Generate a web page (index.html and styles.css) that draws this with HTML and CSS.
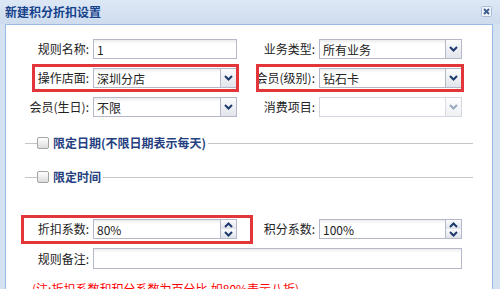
FILE: index.html
```html
<!DOCTYPE html>
<html lang="zh-CN">
<head>
    <meta charset="UTF-8">
    <title>新建积分折扣设置</title>
    <link rel="stylesheet" href="styles.css">
</head>
<body>

    <!-- Dialog window -->
    <div class="window">
        <div class="window-header">
            <span class="window-title">新建积分折扣设置</span>
            <span class="window-close">
                <svg width="11" height="11" viewBox="0 0 11 11">
                    <rect x="0.5" y="0.5" width="10" height="10" rx="1" fill="#eef3fa" stroke="#a9bcd8"/>
                    <path d="M3 3 L8 8 M8 3 L3 8" stroke="#3d5b8c" stroke-width="1.8"/>
                </svg>
            </span>
        </div>

        <div class="window-body">
            <div class="form">
                <div class="form-row">
                    <div class="field">
                        <label class="field-label">规则名称:</label>
                        <div class="field-box"><input class="field-input" value="1"></div>
                    </div>
                    <div class="field field-right">
                        <label class="field-label">业务类型:</label>
                        <div class="field-box">
                            <input class="field-input" value="所有业务">
                            <span class="trigger"><svg width="9" height="6" viewBox="0 0 9 6"><polyline points="1,1 4.5,4.5 8,1" fill="none" stroke="#1e3a6c" stroke-width="2"/></svg></span>
                        </div>
                    </div>
                </div>

                <div class="form-row">
                    <div class="field">
                        <label class="field-label">操作店面:</label>
                        <div class="field-box">
                            <input class="field-input" value="深圳分店">
                            <span class="trigger"><svg width="9" height="6" viewBox="0 0 9 6"><polyline points="1,1 4.5,4.5 8,1" fill="none" stroke="#1e3a6c" stroke-width="2"/></svg></span>
                        </div>
                    </div>
                    <div class="field field-right">
                        <label class="field-label">会员(级别):</label>
                        <div class="field-box">
                            <input class="field-input" value="钻石卡">
                            <span class="trigger"><svg width="9" height="6" viewBox="0 0 9 6"><polyline points="1,1 4.5,4.5 8,1" fill="none" stroke="#1e3a6c" stroke-width="2"/></svg></span>
                        </div>
                    </div>
                </div>

                <div class="form-row">
                    <div class="field">
                        <label class="field-label">会员(生日):</label>
                        <div class="field-box">
                            <input class="field-input" value="不限">
                            <span class="trigger"><svg width="9" height="6" viewBox="0 0 9 6"><polyline points="1,1 4.5,4.5 8,1" fill="none" stroke="#1e3a6c" stroke-width="2"/></svg></span>
                        </div>
                    </div>
                    <div class="field field-right">
                        <label class="field-label">消费项目:</label>
                        <div class="field-box disabled">
                            <input class="field-input" value="" disabled>
                            <span class="trigger"><svg width="9" height="6" viewBox="0 0 9 6"><polyline points="1,1 4.5,4.5 8,1" fill="none" stroke="#9aa8bf" stroke-width="2"/></svg></span>
                        </div>
                    </div>
                </div>

                <!-- Collapsed fieldsets -->
                <div class="groups">
                    <div class="group">
                        <span class="group-line short"></span>
                        <span class="checkbox"></span>
                        <span class="group-title">限定日期(不限日期表示每天)</span>
                        <span class="group-line"></span>
                    </div>
                    <div class="group">
                        <span class="group-line short"></span>
                        <span class="checkbox"></span>
                        <span class="group-title">限定时间</span>
                        <span class="group-line"></span>
                    </div>
                </div>

                <div class="form-row">
                    <div class="field">
                        <label class="field-label">折扣系数:</label>
                        <div class="field-box">
                            <input class="field-input" value="80%">
                            <span class="spinner">
                                <span class="spin"><svg width="9" height="6" viewBox="0 0 9 6"><polyline points="1,5 4.5,1.5 8,5" fill="none" stroke="#1e3a6c" stroke-width="2"/></svg></span>
                                <span class="spin"><svg width="9" height="6" viewBox="0 0 9 6"><polyline points="1,1 4.5,4.5 8,1" fill="none" stroke="#1e3a6c" stroke-width="2"/></svg></span>
                            </span>
                        </div>
                    </div>
                    <div class="field field-right">
                        <label class="field-label">积分系数:</label>
                        <div class="field-box">
                            <input class="field-input" value="100%">
                            <span class="spinner">
                                <span class="spin"><svg width="9" height="6" viewBox="0 0 9 6"><polyline points="1,5 4.5,1.5 8,5" fill="none" stroke="#1e3a6c" stroke-width="2"/></svg></span>
                                <span class="spin"><svg width="9" height="6" viewBox="0 0 9 6"><polyline points="1,1 4.5,4.5 8,1" fill="none" stroke="#1e3a6c" stroke-width="2"/></svg></span>
                            </span>
                        </div>
                    </div>
                </div>

                <div class="form-row remark-row">
                    <div class="field">
                        <label class="field-label">规则备注:</label>
                        <div class="field-box remark"><input class="field-input" value=""></div>
                    </div>
                </div>

                <p class="note">(注:折扣系数和积分系数为百分比,如80%表示八折)</p>
            </div>
        </div>

        <!-- Highlight marks drawn over the form -->
        <div class="mark mark-shop"></div>
        <div class="mark mark-level"></div>
        <div class="mark mark-discount"></div>
    </div>

</body>
</html>
```

FILE: styles.css
```css
body {
    margin: 0;
    font-family: "Noto Sans CJK SC", "Liberation Sans", sans-serif;
    font-size: 12px;
    color: #222;
}

/* Window frame */
.window {
    position: relative;
    width: 500px;
    height: 289px;
    overflow: hidden;
    background-color: #d3e1f1;
}

.window-header {
    height: 24px;
    display: flex;
    align-items: center;
    justify-content: space-between;
    padding: 0 8px 0 5px;
    background: linear-gradient(#dde8f6, #cedcee);
}

.window-title {
    font-weight: bold;
    color: #15428b;
    line-height: 14px;
}

.window-close {
    width: 11px;
    height: 11px;
    margin-top: -1px;
}

.window-close svg {
    display: block;
}

.window-body {
    margin: 0 7px 0 5px;
    height: 265px;
    background-color: #fff;
    border: 1px solid #99bbe8;
    border-bottom: none;
    box-sizing: border-box;
}

/* Form layout */
.form {
    display: flex;
    flex-direction: column;
    align-items: flex-start;
    padding: 14px 0 0 14px;
}

.form-row {
    display: flex;
    height: 20px;
    margin-bottom: 9px;
}

.field {
    display: flex;
    align-items: center;
}

.field-label {
    width: 73px;
    padding-right: 4px;
    box-sizing: border-box;
    text-align: right;
    white-space: nowrap;
    line-height: 14px;
}

.field-right .field-label {
    width: 82px;
}

.field-box {
    width: 144px;
    height: 20px;
    box-sizing: border-box;
    display: flex;
    border: 1px solid #b5b8c8;
    background: linear-gradient(#ececec, #fff 4px);
}

.field-right .field-box {
    width: 143px;
}

.field-box.remark {
    width: 369px;
    height: 21px;
}

.field-box.disabled {
    border-color: #d4d7e0;
    background: #fff;
}

.field-input {
    flex: 1;
    min-width: 0;
    border: none;
    outline: none;
    background: transparent;
    padding: 0 3px;
    font-family: inherit;
    font-size: 12px;
    color: #222;
}

.trigger {
    width: 15px;
    flex-shrink: 0;
    display: flex;
    align-items: center;
    justify-content: center;
    border-left: 1px solid #b5b8c8;
    background: linear-gradient(#fbfbfc, #e2e5eb);
}

.disabled .trigger {
    border-left-color: #dadde5;
    background: linear-gradient(#fdfdfd, #eef0f3);
}

.spinner {
    width: 15px;
    flex-shrink: 0;
    display: flex;
    flex-direction: column;
    border-left: 1px solid #b5b8c8;
}

.spin {
    flex: 1;
    display: flex;
    align-items: center;
    justify-content: center;
    background: linear-gradient(#fbfbfc, #dfe3ea);
}

.remark-row {
    height: 21px;
    margin-bottom: 13px;
}

/* Collapsed fieldsets */
.groups {
    margin: 7px 0 32px 5px;
    width: 448px;
    display: flex;
    flex-direction: column;
    gap: 14px;
}

.group {
    display: flex;
    align-items: center;
    height: 20px;
}

.group-line {
    flex: 1;
    height: 0;
    border-top: 1px solid #c6c6c6;
    margin-top: 1px;
}

.group-line.short {
    flex: none;
    width: 12px;
}

.checkbox {
    width: 12px;
    height: 12px;
    box-sizing: border-box;
    border: 1px solid #a4a4a4;
    border-radius: 2px;
    background: linear-gradient(#ffffff, #dcdcdc);
    margin-right: 4px;
}

.group-title {
    font-weight: bold;
    color: #253f80;
    line-height: 14px;
    margin-right: 2px;
}

.note {
    margin: 0 0 0 12px;
    color: #f00;
    line-height: 14px;
}

/* Red highlight boxes */
.mark {
    position: absolute;
    border: 3px solid #e2363a;
    box-sizing: border-box;
}

.mark-shop {
    left: 32px;
    top: 64px;
    width: 207px;
    height: 28px;
}

.mark-level {
    left: 256px;
    top: 64px;
    width: 208px;
    height: 28px;
}

.mark-discount {
    left: 21px;
    top: 215px;
    width: 232px;
    height: 29px;
}
```
